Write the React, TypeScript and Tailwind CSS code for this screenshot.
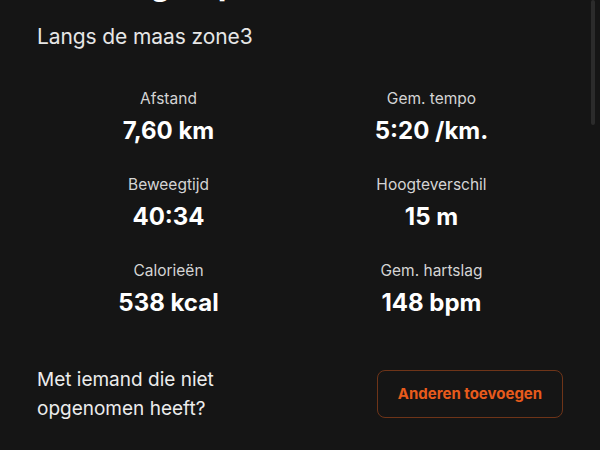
import React from "react";

const stats = [
  { label: "Afstand", value: "7,60 km" },
  { label: "Gem. tempo", value: "5:20 /km." },
  { label: "Beweegtijd", value: "40:34" },
  { label: "Hoogteverschil", value: "15 m" },
  { label: "Calorieën", value: "538 kcal" },
  { label: "Gem. hartslag", value: "148 bpm" },
];

export default function App() {
  return (
    <div
      className="relative w-[600px] h-[450px] overflow-hidden bg-[#151515] text-white"
      style={{ fontFamily: "Inter, 'Noto Sans', sans-serif" }}
    >
      <div className="px-[37px]">
        <div className="mt-[-35px] h-[38px] text-[32px] font-bold leading-[38px] text-white whitespace-nowrap">
          Lekker gelopen!
        </div>
        <div className="mt-[20px] text-[21px] leading-[28px] text-[#e6e6e6] tracking-[-0.1px]">
          Langs de maas zone3
        </div>
        <div className="mt-[38px] grid grid-cols-2 gap-y-[29px]">
          {stats.map((s) => (
            <div key={s.label} className="flex flex-col items-center">
              <div className="text-[15.5px] leading-[20px] text-[#d4d4d4]">{s.label}</div>
              <div className="mt-[7px] text-[24px] leading-[30px] font-bold text-white">
                {s.value}
              </div>
            </div>
          ))}
        </div>
        <div className="mt-[47px] flex items-center justify-between">
          <div className="text-[19px] leading-[29px] text-[#ececec]">
            Met iemand die niet
            <br />
            opgenomen heeft?
          </div>
          <button className="w-[186px] h-[48px] rounded-[8px] border border-[#6e3418] text-[15px] font-bold text-[#e85b1c]">
            Anderen toevoegen
          </button>
        </div>
      </div>
      <div className="absolute right-[5px] top-0 w-[4px] h-[125px] rounded-full bg-[#2b2b2b]" />
    </div>
  );
}
